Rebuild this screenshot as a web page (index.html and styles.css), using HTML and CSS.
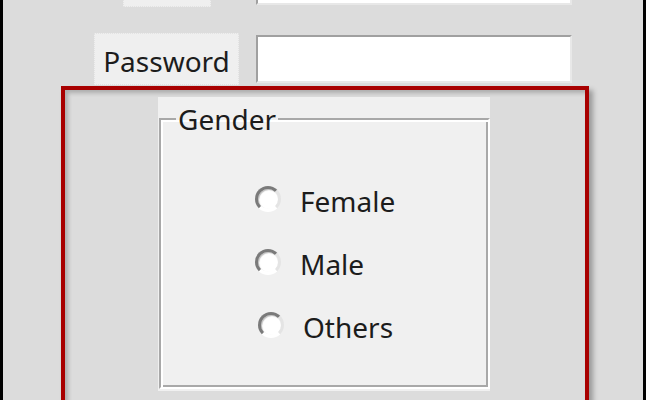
FILE: index.html
```html
<!DOCTYPE html>
<html lang="en">
<head>
    <meta charset="UTF-8">
    <meta name="viewport" content="width=device-width, initial-scale=1.0">
    <title>Sign Up</title>
    <link rel="stylesheet" href="styles.css">
</head>
<body>
    <div class="window">
        <form class="signup">
            <div class="fields">
                <label class="field-label short" for="email"></label>
                <input class="text-box" type="text" id="email" name="email">

                <label class="field-label" for="password">Password</label>
                <input class="text-box" type="password" id="password" name="password">
            </div>

            <div class="highlight">
                <div class="group-box">
                    <fieldset class="gender">
                        <legend>Gender</legend>
                        <div class="options">
                            <label class="option">
                                <input type="radio" name="gender" value="female">
                                <span>Female</span>
                            </label>
                            <label class="option">
                                <input type="radio" name="gender" value="male">
                                <span>Male</span>
                            </label>
                            <label class="option others">
                                <input type="radio" name="gender" value="others">
                                <span>Others</span>
                            </label>
                        </div>
                    </fieldset>
                </div>
            </div>
        </form>
    </div>
</body>
</html>
```

FILE: styles.css
```css
body {
    margin: 0;
    background-color: #fff;
    font-family: "Noto Sans", "Segoe UI", Arial, sans-serif;
    color: #1c1c1c;
    height: 400px;
    overflow: hidden;
}

.window {
    width: 640px;
    height: 400px;
    border-left: 3px solid #000;
    border-right: 3px solid #000;
    background-color: #dcdcdc;
    overflow: hidden;
}

/* label / textbox pairs, labels centred in their column */
.fields {
    display: grid;
    grid-template-columns: 151px 316px;
    column-gap: 14px;
    row-gap: 26px;
    align-items: center;
    padding-left: 88px;
    margin-top: -45px;
}

.field-label {
    justify-self: center;
    box-sizing: border-box;
    height: 52px;
    padding: 8px 8px 6px;
    border: 1px dotted #e2e2e2;
    background-color: #efefef;
    font-size: 28px;
    line-height: 38px;
}

.field-label.short {
    width: 88px;
}

.text-box {
    box-sizing: border-box;
    width: 100%;
    height: 48px;
    margin: 0;
    padding: 0 6px;
    border: 2px solid;
    border-color: #a0a0a0 #e8e8e8 #e8e8e8 #a0a0a0;
    background-color: #fff;
    font: inherit;
}

.highlight {
    box-sizing: border-box;
    width: 528px;
    margin: 1px 0 0 58px;
    padding: 7px 0 30px 93px;
    border: 4px solid #a80000;
    box-shadow: 4px 4px 5px rgba(0, 0, 0, 0.3), inset 3px 3px 4px rgba(0, 0, 0, 0.22);
}

.group-box {
    box-sizing: border-box;
    width: 332px;
    padding: 8px 0 2px 1px;
    background-color: #f0f0f0;
}

.gender {
    margin: 0;
    padding: 49px 0 41px;
    border: 2px solid;
    border-color: #a8a8a8 #fff #fff #a8a8a8;
    box-shadow: inset 2px 2px 0 #fff, inset -2px -2px 0 #a8a8a8;
}

.gender legend {
    margin-left: 15px;
    padding: 0 2px;
    font-size: 28px;
    line-height: 28px;
}

.options {
    display: flex;
    flex-direction: column;
    gap: 25px;
    padding-left: 94px;
}

.option {
    display: flex;
    align-items: flex-start;
    height: 38px;
    font-size: 28px;
    line-height: 38px;
}

.option input[type="radio"] {
    appearance: none;
    box-sizing: border-box;
    width: 26px;
    height: 26px;
    margin: 4px 19px 0 0;
    border: 3px solid;
    border-color: #7a7a7a #e4e4e4 #fff #7a7a7a;
    border-radius: 50%;
    background-color: #fff;
    box-shadow: inset 1px 1px 1px rgba(0, 0, 0, 0.25);
}

.option.others {
    margin-left: 3px;
}
```
